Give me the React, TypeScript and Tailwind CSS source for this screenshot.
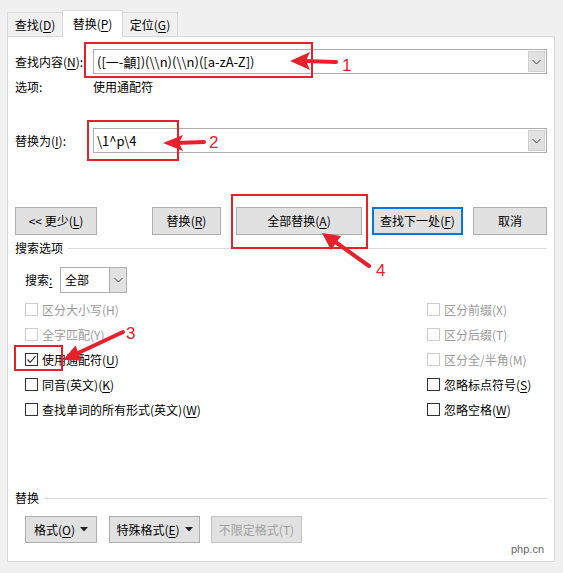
import React from 'react';

const RED = '#e5222b';

const Chevron: React.FC = () => (
  <svg width="9" height="6" viewBox="0 0 9 6" fill="none">
    <path d="M0.5 1 L4.5 5 L8.5 1" stroke="#404040" strokeWidth="1" />
  </svg>
);

const Caret: React.FC = () => (
  <svg width="8" height="5" viewBox="0 0 8 5" className="ml-[5px]">
    <path d="M0 0 H8 L4 4.5 Z" fill="#222" />
  </svg>
);

const Combo: React.FC<{ value: string }> = ({ value }) => (
  <div className="flex-1 flex h-[25px] border border-[#adadad] bg-white">
    <div className="flex-1 pl-[3px] flex items-center text-[13px] text-black whitespace-nowrap">{value}</div>
    <div className="w-[17px] my-[1px] mr-[1px] bg-[#e1e1e1] border border-[#cfcfcf] flex items-center justify-center">
      <Chevron />
    </div>
  </div>
);

const Btn: React.FC<{ w: string; primary?: boolean; disabled?: boolean; children: React.ReactNode }> = ({ w, primary, disabled, children }) => (
  <div
    className={
      w +
      ' h-full flex items-center justify-center bg-[#e1e1e1] whitespace-nowrap ' +
      (primary ? 'border-2 border-[#0078d7]' : disabled ? 'border border-[#c4c4c4] text-[#a0a0a0]' : 'border border-[#adadad]')
    }
  >
    {children}
  </div>
);

const Check: React.FC<{ checked?: boolean; disabled?: boolean; children: React.ReactNode }> = ({ checked, disabled, children }) => (
  <div className={'h-[25px] flex items-center whitespace-nowrap ' + (disabled ? 'text-[#9a9a9a]' : 'text-black')}>
    <div className={'w-[13px] h-[13px] border mr-[4px] flex items-center justify-center bg-white ' + (disabled ? 'border-[#cccccc]' : 'border-[#333333]')}>
      {checked && (
        <svg width="11" height="11" viewBox="0 0 11 11" fill="none">
          <path d="M1.5 5.5 L4.2 8.3 L9.5 2.2" stroke="#333" strokeWidth="1.2" />
        </svg>
      )}
    </div>
    {children}
  </div>
);

const Key: React.FC<{ k: string }> = ({ k }) => (
  <>
    (<u className="underline-offset-2">{k}</u>)
  </>
);

const App: React.FC = () => {
  return (
    <div className="relative w-[563px] h-[573px] bg-[#f0f0f0] overflow-hidden font-['Noto_Sans_CJK_SC',sans-serif] text-[12px] leading-[16px] text-black">
      {/* tabs */}
      <div className="flex items-end h-[36px] pl-[7px]">
        <div className="w-[56px] h-[24px] border border-b-0 border-[#d9d9d9] flex items-center justify-center">
          查找<Key k="D" />
        </div>
        <div className="w-[61px] h-[27px] -ml-px -mb-px relative z-10 bg-white border border-b-0 border-[#d9d9d9] flex items-center justify-center">
          替换<Key k="P" />
        </div>
        <div className="w-[56px] h-[24px] -ml-px border border-b-0 border-[#d9d9d9] flex items-center justify-center">
          定位<Key k="G" />
        </div>
      </div>

      {/* panel */}
      <div className="ml-[7px] w-[548px] h-[526px] border border-[#d9d9d9] bg-white px-[7px] flex flex-col">
        <div className="mt-[12px] flex items-center h-[25px]">
          <div className="w-[78px]">
            查找内容<Key k="N" />:
          </div>
          <Combo value={'([一-龥])(\\\\n)(\\\\n)([a-zA-Z])'} />
        </div>

        <div className="mt-[5px] flex h-[16px]">
          <div className="w-[78px]">选项:</div>
          <div>使用通配符</div>
        </div>

        <div className="mt-[33px] flex items-center h-[25px]">
          <div className="w-[78px]">
            替换为<Key k="I" />:
          </div>
          <Combo value={'\\1^p\\4'} />
        </div>

        <div className="mt-[54px] flex h-[28px]">
          <Btn w="w-[82px]">
            &lt;&lt; 更少<Key k="L" />
          </Btn>
          <div className="w-[55px]" />
          <Btn w="w-[69px]">
            替换<Key k="R" />
          </Btn>
          <div className="w-[15px]" />
          <Btn w="w-[126px]">
            全部替换<Key k="A" />
          </Btn>
          <div className="w-[10px]" />
          <Btn w="w-[91px]" primary>
            查找下一处<Key k="F" />
          </Btn>
          <div className="w-[10px]" />
          <Btn w="w-[74px]">取消</Btn>
        </div>

        <div className="mt-[5px] flex items-center h-[16px]">
          <span>搜索选项</span>
          <div className="flex-1 h-px bg-[#dcdcdc] ml-[5px]" />
        </div>

        <div className="mt-[11px] pl-[10px] flex items-center h-[26px]">
          <div className="w-[35px]">
            搜索<u className="underline-offset-2">:</u>
          </div>
          <div className="w-[67px] h-full flex border border-[#adadad]">
            <div className="flex-1 pl-[4px] flex items-center">全部</div>
            <div className="w-[17px] bg-[#e1e1e1] border-l border-[#adadad] flex items-center justify-center">
              <Chevron />
            </div>
          </div>
        </div>

        <div className="mt-[4px] pl-[10px] flex">
          <div className="w-[402px] flex flex-col">
            <Check disabled>区分大小写(H)</Check>
            <Check disabled>全字匹配(Y)</Check>
            <Check checked>
              使用通配符<Key k="U" />
            </Check>
            <Check>
              同音(英文)<Key k="K" />
            </Check>
            <Check>
              查找单词的所有形式(英文)<Key k="W" />
            </Check>
          </div>
          <div className="flex-1 flex flex-col">
            <Check disabled>区分前缀(X)</Check>
            <Check disabled>区分后缀(T)</Check>
            <Check disabled>区分全/半角(M)</Check>
            <Check>
              忽略标点符号<Key k="S" />
            </Check>
            <Check>
              忽略空格<Key k="W" />
            </Check>
          </div>
        </div>

        <div className="mt-[68px] flex items-center h-[16px]">
          <span>替换</span>
          <div className="flex-1 h-px bg-[#dcdcdc] ml-[5px]" />
        </div>

        <div className="mt-[10px] pl-[10px] flex h-[27px]">
          <Btn w="w-[72px]">
            格式<Key k="O" />
            <Caret />
          </Btn>
          <div className="w-[12px]" />
          <Btn w="w-[91px]">
            特殊格式<Key k="E" />
            <Caret />
          </Btn>
          <div className="w-[11px]" />
          <Btn w="w-[91px]" disabled>
            不限定格式(T)
          </Btn>
        </div>
      </div>

      {/* watermark */}
      <span className="absolute left-[511px] top-[541px] text-[11px] text-[#666] font-['Liberation_Sans',sans-serif]">php.cn</span>

      {/* annotation boxes */}
      <div className="absolute left-[84px] top-[42px] w-[229px] h-[36px] border-2 border-[#e5222b] pointer-events-none" />
      <div className="absolute left-[87px] top-[120px] w-[92px] h-[41px] border-2 border-[#e5222b] pointer-events-none" />
      <div className="absolute left-[231px] top-[194px] w-[137px] h-[55px] border-2 border-[#e5222b] pointer-events-none" />
      <div className="absolute left-[14px] top-[345px] w-[49px] h-[26px] border-2 border-[#e5222b] pointer-events-none" />

      {/* annotation arrows */}
      <svg className="absolute inset-0 pointer-events-none" width="563" height="573" viewBox="0 0 563 573">
        <g stroke={RED} strokeWidth="4" strokeLinecap="round" fill="none">
          <line x1="336" y1="62" x2="304" y2="61" />
          <line x1="204" y1="142" x2="176" y2="143" />
          <line x1="123" y1="332" x2="76" y2="354" />
          <line x1="369" y1="266" x2="334" y2="241" />
        </g>
        <g fill={RED}>
          <polygon points="290,61 310,52 306,61 310,70" />
          <polygon points="163,143 183,135 179,143 183,151" />
          <polygon points="63,360 75.5,345.5 78.5,353 82,360.5" />
          <polygon points="322,233 341,236 336,243 331,250" />
        </g>
      </svg>
      <span className="absolute left-[342px] top-[57px] text-[17px] leading-none text-[#e5222b] font-['Liberation_Sans',sans-serif]">1</span>
      <span className="absolute left-[209px] top-[134px] text-[17px] leading-none text-[#e5222b] font-['Liberation_Sans',sans-serif]">2</span>
      <span className="absolute left-[126px] top-[325px] text-[17px] leading-none text-[#e5222b] font-['Liberation_Sans',sans-serif]">3</span>
      <span className="absolute left-[376px] top-[262px] text-[17px] leading-none text-[#e5222b] font-['Liberation_Sans',sans-serif]">4</span>
    </div>
  );
};

export default App;
